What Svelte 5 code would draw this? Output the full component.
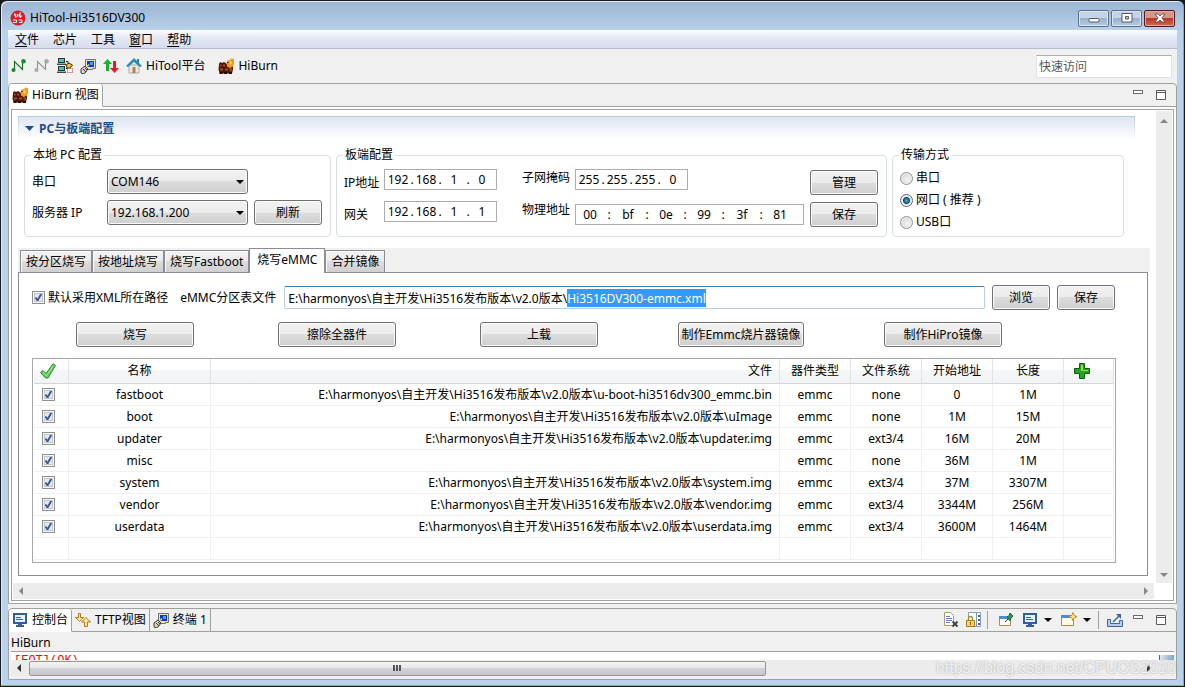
<script>
  import { onMount } from 'svelte';

  const menus = [
    ['文', '件', true],
    ['芯', '片', false],
    ['工', '具', false],
    ['窗', '口', true],
    ['帮', '助', true]
  ];
  const tabs = ['按分区烧写', '按地址烧写', '烧写Fastboot', '烧写eMMC', '合并镜像'];
  let activeTab = $state(3);
  const actions = ['烧写', '擦除全器件', '上载', '制作Emmc烧片器镜像', '制作HiPro镜像'];

  const base = 'E:\\harmonyos\\自主开发\\Hi3516发布版本\\v2.0版本\\';
  const xmlName = 'Hi3516DV300-emmc.xml';
  let path = $state(base + xmlName);

  const rows = $state([
    { on: true, name: 'fastboot', file: base + 'u-boot-hi3516dv300_emmc.bin', type: 'emmc', fs: 'none', start: '0', len: '1M' },
    { on: true, name: 'boot', file: base + 'uImage', type: 'emmc', fs: 'none', start: '1M', len: '15M' },
    { on: true, name: 'updater', file: base + 'updater.img', type: 'emmc', fs: 'ext3/4', start: '16M', len: '20M' },
    { on: true, name: 'misc', file: '', type: 'emmc', fs: 'none', start: '36M', len: '1M' },
    { on: true, name: 'system', file: base + 'system.img', type: 'emmc', fs: 'ext3/4', start: '37M', len: '3307M' },
    { on: true, name: 'vendor', file: base + 'vendor.img', type: 'emmc', fs: 'ext3/4', start: '3344M', len: '256M' },
    { on: true, name: 'userdata', file: base + 'userdata.img', type: 'emmc', fs: 'ext3/4', start: '3600M', len: '1464M' }
  ]);

  const ip = ['192', '168', '1', '0'];
  const gateway = ['192', '168', '1', '1'];
  const mask = ['255', '255', '255', '0'];
  const mac = ['00', 'bf', '0e', '99', '3f', '81'];
  let mode = $state('net');

  let pathInput;
  onMount(() => {
    pathInput.focus();
    pathInput.setSelectionRange(base.length, path.length);
  });
</script>

{#snippet beaver()}
  <svg class="ic" viewBox="0 0 16 16" aria-hidden="true">
    <path d="M1 6l1-2 2 1 2-1 3 2h6v5l-1 4.500H2L.5 12z" fill="#4a1605" />
    <path d="M2 6.500h1.500v2H2zM5 6.500h2v2H5zM2 10.500h3v2H2zM7 10.500h3v2H7z" fill="#b14c18" />
    <path d="M8.500 5.500L9.500 2.500 12 2l1.500-1.500L16 1v5l-1.500 3-3 1-2.500-1.500z" fill="#f09a20" />
    <path d="M11 3.500l2.500-.5.500 2.500-2 1.500z" fill="#ffc95a" />
    <path d="M9 4h1.500v1H9z" fill="#3b1204" />
    <path d="M11 10.500l3-1v3.500l-2 1z" fill="#9c3a10" />
    <path d="M1.500 14h3v2h-3zM6 14h3v2H6zM11 14h3v2h-3z" fill="#240a03" />
  </svg>
{/snippet}

{#snippet node(c, d)}
  <svg class="ic" viewBox="0 0 16 16" aria-hidden="true">
    <path d="M3.500 12V3.500l8 8V4" fill="none" stroke={d} stroke-width="1.100" />
    <circle cx="2.500" cy="12" r="2.100" fill={c} />
    <circle cx="12.500" cy="3.200" r="2.300" fill={c} />
  </svg>
{/snippet}

{#snippet terminal()}
  <svg class="ic" viewBox="0 0 16 16" aria-hidden="true">
    <path d="M5.500 1.500h10v9h-3v1h-5v-1h-2z" fill="#e8e4cf" stroke="#77745f" />
    <rect x="7" y="3" width="7" height="6" fill="#0a35e0" />
    <path d="M10 4h3v3h-3z" fill="#4d9df5" />
    <path d="M1 11l4-3 3 3-3 4-2 1-2-1z" fill="#d9d6bd" stroke="#3c3a2c" />
    <path d="M3 11l3 3M5 10l2 2" stroke="#3c3a2c" />
    <path d="M7 8.500l2-2" stroke="#f2e04c" stroke-width="1.500" />
  </svg>
{/snippet}

{#snippet monitor()}
  <svg class="ic" viewBox="0 0 16 16" aria-hidden="true">
    <rect x="2" y="2" width="12" height="9" fill="#eaf2fb" stroke="#2f5f9e" stroke-width="2" />
    <path d="M4 5.500h5M4 7.500h7" stroke="#3c5f91" />
    <path d="M6 12h4v1h2v2H4v-2h2z" fill="#33609c" />
  </svg>
{/snippet}

{#snippet paneButtons()}
  <span class="pane-btns">
    <button aria-label="最小化"><svg width="10" height="12" viewBox="0 0 10 12"><rect x=".5" y="1.500" width="9" height="3" fill="#fff" stroke="#6a6a6a" /></svg></button>
    <button aria-label="最大化"><svg width="10" height="12" viewBox="0 0 10 12"><path d="M.5 1.500h9v9h-9zM0 3.500h10" fill="#fff" stroke="#5a5a5a" /></svg></button>
  </span>
{/snippet}

{#snippet octets(values, label, id)}
  <div class="seg" role="group" aria-label={label}>
    {#each values as v, i}
      {#if i > 0}<span>.</span>{/if}
      <input id={i === 0 ? id : undefined} aria-label={`${label} ${i + 1}`} value={v} maxlength="3" />
    {/each}
  </div>
{/snippet}

<div class="window">
  <header class="title">
    <svg class="ic" viewBox="0 0 16 16" aria-hidden="true">
      <circle cx="8" cy="8" r="7.500" fill="#d81f26" />
      <path d="M4.500 3.500l1.500 4M10.500 2.500L9 6.500M7.500 4v2.500M11.500 5.500l-1.500 2" stroke="#fff" stroke-width="1.400" fill="none" />
      <path d="M3 10h3.500v2.500H3M8.500 10h3.500v2.500H9" stroke="#fff" fill="none" />
    </svg>
    <h1>HiTool-Hi3516DV300</h1>
    <div class="wbtns">
      <button aria-label="最小化窗口"><svg width="12" height="12" viewBox="0 0 12 12"><rect x="1" y="6.500" width="10" height="3.500" rx="1" fill="#fff" stroke="#535b6b" /></svg></button>
      <button aria-label="最大化窗口"><svg width="12" height="12" viewBox="0 0 12 12"><path fill-rule="evenodd" d="M1 1.500h10v8.500H1zM4.500 4.500v2.500h3V4.500z" fill="#fff" stroke="#535b6b" /></svg></button>
      <button class="close" aria-label="关闭窗口"><svg width="12" height="12" viewBox="0 0 12 12"><path d="M1 2h3l2 2 2-2h3L8 6l3 4H8L6 8l-2 2H1l3-4z" fill="#fff" stroke="#5c3a46" stroke-width=".8" /></svg></button>
    </div>
  </header>

  <div class="client">
    <nav class="menu">
      {#each menus as [a, b, u]}
        <button><span class:u>{a}</span>{b}</button>
      {/each}
    </nav>

    <div class="toolbar">
      <button aria-label="连接">{@render node('#1b8a2f', '#0c6b1e')}</button>
      <button aria-label="断开">{@render node('#a9a9a9', '#8f8f8f')}</button>
      <button aria-label="网络配置">
        <svg class="ic" viewBox="0 0 16 16" aria-hidden="true">
          <path d="M1 0h7v5H1zM1 8h7v5H1z" fill="#333" /><path d="M2 1h5v3H2zM2 9h5v3H2z" fill="#39c6c2" />
          <path d="M0 5h9v2H0zM0 13h9v2H0z" fill="#a5a5a5" /><path d="M0 6h9v1H0zM0 14h9v1H0z" fill="#444" />
          <path d="M9 3.500h2v3M9 10.500h2v-2" fill="none" stroke="#222" />
          <path d="M9 7l3-2 3.500 2-2.500 3H10z" fill="#e8c93a" stroke="#3b3008" />
          <path d="M10.500 10.500h5v4h-5z" fill="#fff" stroke="#d22" stroke-dasharray="1 1" />
        </svg>
      </button>
      <button aria-label="终端">{@render terminal()}</button>
      <button aria-label="传输">
        <svg class="ic" viewBox="0 0 16 16" aria-hidden="true">
          <path d="M4.500 1L9 6H6v7H3V6H0z" fill="#13b52a" />
          <path d="M11.500 15L7 10h3V3h3v7h3z" fill="#dd1c2b" />
        </svg>
      </button>
      <button class="wide">
        <svg class="ic" viewBox="0 0 16 16" aria-hidden="true">
          <path d="M3 7h10v8H3z" fill="#e9e9e6" stroke="#a8a8a4" />
          <path d="M6.500 9h3v6h-3z" fill="#b98146" />
          <path d="M11 1h2v4h-2z" fill="#2d7fa8" />
          <path d="M8 0l8 8-2 1-6-5-6 5-2-1z" fill="#2c8bb8" />
        </svg>HiTool平台</button>
      <button class="wide">{@render beaver()}HiBurn</button>
      <input class="quick" aria-label="快速访问" placeholder="快速访问" />
    </div>

    <main class="pane">
      <div class="pane-head">
        <div class="vtab on">{@render beaver()}HiBurn 视图</div>
        {@render paneButtons()}
      </div>
      <div class="viewport">
        <div class="content">
          <h2>
            <svg width="9" height="5" viewBox="0 0 9 5" aria-hidden="true"><path d="M0 0h9L4.500 5z" fill="#1f4e86" /></svg>PC与板端配置
          </h2>

          <div class="groups">
            <fieldset class="local">
              <legend>本地 PC 配置</legend>
              <div class="local-grid">
                <label for="port">串口</label>
                <div class="sel">
                  <select id="port"><option>COM146</option></select>
                  <svg width="8" height="4" viewBox="0 0 8 4" aria-hidden="true"><path d="M0 0h8L4 4z" /></svg>
                </div>
                <span></span>
                <label for="srv">服务器 IP</label>
                <div class="sel">
                  <select id="srv"><option>192.168.1.200</option></select>
                  <svg width="8" height="4" viewBox="0 0 8 4" aria-hidden="true"><path d="M0 0h8L4 4z" /></svg>
                </div>
                <button class="btn">刷新</button>
              </div>
            </fieldset>

            <fieldset class="board">
              <legend>板端配置</legend>
              <div class="board-row">
                <div class="stack labels low"><label for="ip">IP地址</label><label for="gw">网关</label></div>
                <div class="stack fields">
                  {@render octets(ip, 'IP地址', 'ip')}
                  {@render octets(gateway, '网关', 'gw')}
                </div>
                <div class="stack labels second"><label for="mask">子网掩码</label><label for="mac">物理地址</label></div>
                <div class="stack fields loose">
                  {@render octets(mask, '子网掩码', 'mask')}
                  <div class="seg mac" role="group" aria-label="物理地址">
                    {#each mac as v, i}
                      {#if i > 0}<span>:</span>{/if}
                      <input id={i === 0 ? 'mac' : undefined} aria-label={`物理地址 ${i + 1}`} value={v} maxlength="2" />
                    {/each}
                  </div>
                </div>
                <div class="stack side"><button class="btn">管理</button><button class="btn">保存</button></div>
              </div>
            </fieldset>

            <fieldset class="trans">
              <legend>传输方式</legend>
              <div class="radios">
                <label><input type="radio" value="serial" bind:group={mode} />串口</label>
                <label><input type="radio" value="net" bind:group={mode} />网口 ( 推荐 )</label>
                <label><input type="radio" value="usb" bind:group={mode} />USB口</label>
              </div>
            </fieldset>
          </div>

          <div class="tabs" role="tablist">
            {#each tabs as t, i}
              <button role="tab" aria-selected={i === activeTab} class:on={i === activeTab} onclick={() => (activeTab = i)}>{t}</button>
            {/each}
          </div>

          <section class="panel">
            <div class="path-row">
              <label class="chk"><input type="checkbox" checked />默认采用XML所在路径</label>
              <label class="plabel" for="xml">eMMC分区表文件</label>
              <input id="xml" class="path" bind:this={pathInput} bind:value={path} spellcheck="false" />
              <button class="btn small">浏览</button>
              <button class="btn small">保存</button>
            </div>

            <div class="actions">
              {#each actions as a}<button class="btn">{a}</button>{/each}
            </div>

            <div class="table-box">
              <table>
                <colgroup>
                  <col class="c-check" /><col class="c-name" /><col /><col class="c-n" /><col class="c-n" /><col class="c-n" /><col class="c-n" /><col class="c-add" />
                </colgroup>
                <thead>
                  <tr>
                    <th class="first">
                      <svg class="ic" viewBox="0 0 16 16" role="img" aria-label="全选"><path d="M.5 9.500L3 7.500l3 3L13 .8l2.500 1.700L8 15H5.500z" fill="#5fce5a" stroke="#2c8f35" /><path d="M3 9l3.500 4L13.500 2.500" stroke="#a5eb9a" fill="none" /></svg>
                    </th>
                    <th>名称</th><th class="file">文件</th><th>器件类型</th><th>文件系统</th><th>开始地址</th><th>长度</th>
                    <th class="add">
                      <svg class="ic" viewBox="0 0 16 16" role="img" aria-label="添加"><path d="M5.500.5h5v5h5v5h-5v5h-5v-5h-5v-5h5z" fill="#22a722" stroke="#0c5c0c" /><path d="M7 2h2v5h5v1H7z" fill="#8be04a" /></svg>
                    </th>
                  </tr>
                </thead>
                <tbody>
                  {#each rows as r}
                    <tr>
                      <td class="first"><input type="checkbox" aria-label={r.name} bind:checked={r.on} /></td>
                      <td>{r.name}</td><td class="file">{r.file}</td><td>{r.type}</td><td>{r.fs}</td><td>{r.start}</td><td>{r.len}</td><td></td>
                    </tr>
                  {/each}
                  <tr><td></td><td></td><td></td><td></td><td></td><td></td><td></td><td></td></tr>
                </tbody>
              </table>
            </div>
          </section>
        </div>

        <div class="vbar" aria-hidden="true">
          <svg width="8" height="4" viewBox="0 0 8 4"><path d="M0 4h8L4 0z" fill="#868686" /></svg>
          <svg width="8" height="4" viewBox="0 0 8 4"><path d="M0 0h8L4 4z" fill="#868686" /></svg>
        </div>
        <div class="hbar" aria-hidden="true">
          <svg width="4" height="8" viewBox="0 0 4 8"><path d="M4 0v8L0 4z" fill="#868686" /></svg>
          <svg width="4" height="8" viewBox="0 0 4 8"><path d="M0 0v8l4-4z" fill="#868686" /></svg>
        </div>
      </div>
    </main>

    <section class="pane console">
      <div class="pane-head">
        <button class="vtab on">{@render monitor()}控制台</button>
        <button class="vtab">
          <svg class="ic" viewBox="0 0 16 16" aria-hidden="true">
            <path d="M3.500 1.500h2v4h3l-4 4-4-4h3z" fill="#fbe3a0" stroke="#b07a1c" />
            <path d="M11 5.500l4.500 4.500h-3v4.500h-3V10h-3z" fill="#fbe3a0" stroke="#b07a1c" />
          </svg>TFTP视图</button>
        <button class="vtab">{@render terminal()}终端 1</button>
        <div class="ctools">
          <button aria-label="清除控制台">
            <svg class="ic" viewBox="0 0 16 16"><path d="M1.500.5h6l3 3v10h-9z" fill="#fff" stroke="#b49b5a" /><path d="M3 4.500h4M3 6.500h6M3 8.500h6M3 10.500h4" stroke="#5c82b8" /><path d="M9.500 9.500l5 5M14.500 9.500l-5 5" stroke="#444" stroke-width="2" /></svg>
          </button>
          <button class="lock" aria-label="滚动锁定">
            <svg class="ic" viewBox="0 0 16 16"><path d="M2.500.5h12v14h-12z" fill="#fdfdfd" stroke="#8a9cc0" /><path d="M10.500 1v13" stroke="#7d97c9" /><path d="M12 3h2v2h-2zM12 7h2v2h-2zM12 11h2v2h-2z" fill="#3f68ad" /><path d="M2.500 8V6.500a2 2 0 0 1 4 0V8" fill="none" stroke="#b08a25" stroke-width="1.400" /><path d="M.5 8.500h8v6h-8z" fill="#f7d36a" stroke="#a87a14" /><path d="M4 10h1v3H4z" fill="#8a5f08" /></svg>
          </button>
          <i></i>
          <button class="pin" aria-label="固定控制台">
            <svg class="ic" viewBox="0 0 16 16"><path d="M1.500 4.500h11v9h-11z" fill="#fff" stroke="#a3904e" /><path d="M1 4h9v3H1z" fill="#4c8dd8" /><path d="M7 10l4-4" stroke="#333" /><path d="M9 5l2-1 1-3 3 3-2 2-1 3z" fill="#2d9a45" stroke="#1a6c2b" /></svg>
          </button>
          <button aria-label="显示控制台">{@render monitor()}</button>
          <button class="dd" aria-label="选择控制台"><svg width="8" height="4" viewBox="0 0 8 4"><path d="M0 0h8L4 4z" /></svg></button>
          <button class="gap" aria-label="打开控制台">
            <svg class="ic" viewBox="0 0 16 16"><path d="M.5 3.500h12v10H.5z" fill="#fffbe8" stroke="#a3904e" /><path d="M0 3h9v3H0z" fill="#4c8dd8" /><path d="M12 .5l1.200 3 3 1.200-3 1.200-1.200 3-1.200-3-3-1.200 3-1.200z" fill="#ffe792" stroke="#b98518" stroke-width=".9" /></svg>
          </button>
          <button class="dd" aria-label="控制台类型"><svg width="8" height="4" viewBox="0 0 8 4"><path d="M0 0h8L4 4z" /></svg></button>
          <i></i>
          <button aria-label="分离"><svg class="ic" viewBox="0 0 16 16"><path d="M.5 7.500h3v4h9v-3h3v6H.5z" fill="#b9cbe8" stroke="#3e649f" /><path d="M6 10l6-6" stroke="#3e649f" stroke-width="1.500" /><path d="M9 2h5v5z" fill="#3e649f" /></svg></button>
          {@render paneButtons()}
        </div>
      </div>
      <div class="cname">HiBurn</div>
      <div class="log"><span>[EOT](OK)</span><b></b></div>
      <div class="cbar" aria-hidden="true">
        <svg width="4" height="8" viewBox="0 0 4 8"><path d="M4 0v8L0 4z" fill="#333" /></svg>
        <div class="thumb"><svg width="9" height="6" viewBox="0 0 9 6"><path d="M1 0v6M4 0v6M7 0v6" stroke="#555" stroke-width="2" /></svg></div>
        <svg class="r" width="4" height="8" viewBox="0 0 4 8"><path d="M0 0v8l4-4z" fill="#333" /></svg>
      </div>
    </section>
  </div>
  <div class="mark">https://blog.csdn.net/CPUOS2010</div>
</div>

<style>
  :global(body) { background: #1a1a1e; }
  .window, .window :global(*) { box-sizing: border-box; }
  .window {
    position: relative;
    display: flex;
    flex-direction: column;
    min-height: 100vh;
    padding: 0 7px 6px;
    border: 1px solid #16181c;
    border-radius: 7px 7px 0 0;
    background: linear-gradient(#9ab4d2, #b9d1ea 30px, #b9d1ea);
    box-shadow: inset -1px -1px 0 #35c8ea, inset 1px 1px 0 #e4eef8;
    font: 12px/18px "Noto Sans", "Noto Sans CJK SC", sans-serif;
    color: #000;
  }
  button, input, select { font: inherit; color: inherit; margin: 0; }
  button { padding: 0; border: 0; background: none; white-space: nowrap; }
  .ic { width: 16px; height: 16px; flex: none; display: block; }

  .title { display: flex; align-items: center; height: 29px; padding: 5px 1px 0 2px; gap: 4px; }
  h1 { margin: 0; font: inherit; line-height: 20px; flex: 1; }
  .wbtns { display: flex; gap: 2px; padding-right: 1px; }
  .wbtns button {
    display: flex; align-items: center; justify-content: center;
    width: 31px; height: 17px;
    border: 1px solid #5d6f88; border-radius: 2px;
    box-shadow: inset 0 0 0 1px #d9e6f4;
    background: linear-gradient(#c3d4e7 50%, #99b1cd 50%, #b6cce4);
  }
  .wbtns .close { border-color: #4d1a22; box-shadow: inset 0 0 0 1px #e3a59d; background: linear-gradient(#dc9488 50%, #b8382a 50%, #cf6a4e); }

  .client { flex: 1; display: flex; flex-direction: column; background: #f0f0f0; min-width: 0; }
  .menu { display: flex; height: 19px; border-bottom: 1px solid #b5bcd2; background: linear-gradient(#fbfcfe, #e6eaf5 40%, #d6dcee); }
  .menu button { padding: 0 7px; line-height: 20px; }
  .u { text-decoration: underline; text-underline-offset: 2px; }
  .toolbar { display: flex; align-items: center; height: 34px; padding: 0 5px 0 3px; gap: 7px; }
  .wide { display: flex; align-items: center; gap: 4px; line-height: 20px; }
  .wide + .wide { margin-left: 6px; }
  .quick { margin-left: auto; width: 136px; height: 23px; padding: 0 2px; border: 1px solid #e2e3ea; border-top-color: #abadb3; background: #fff; }
  .quick::placeholder { color: #555; opacity: 1; }

  .pane { display: flex; flex-direction: column; border: 1px solid #a0a0a0; border-radius: 4px 4px 0 0; min-width: 0; }
  main.pane { flex: 1; padding-bottom: 2px; }
  .pane-head { display: flex; align-items: stretch; height: 23px; border-bottom: 1px solid #a0a0a0; }
  .vtab { display: flex; align-items: center; gap: 4px; padding: 0 3px; border-right: 1px solid #a0a0a0; margin-bottom: -1px; border-bottom: 1px solid #a0a0a0; white-space: nowrap; }
  .vtab.on { background: #fff; border-bottom-color: #fff; border-radius: 4px 3px 0 0; }
  .pane-btns { margin-left: auto; display: flex; align-items: center; gap: 13px; padding: 0 10px 0 8px; }
  .pane-btns svg { display: block; }

  .viewport { flex: 1; display: grid; grid-template: 1fr 16px / 1fr 16px; gap: 0 2px; margin: 2px 2px 0; padding: 1px; border: 1px solid #a0a0a0; background: #fff; box-shadow: 0 0 0 2px #fff; }
  .content { padding: 5px 5px 7px; min-width: 0; }
  .vbar, .hbar { background: #ececec; display: flex; justify-content: space-between; align-items: center; }
  .vbar { flex-direction: column; padding: 8px 0 6px; }
  .hbar { padding: 0 6px; }

  h2 {
    display: flex; align-items: center; gap: 5px;
    height: 24px; margin: 0 14px 0 0; padding: 0 6px;
    border: 1px solid #b8cae0; border-bottom: 0;
    border-image: linear-gradient(#b8cae0, #fff) 1;
    background: linear-gradient(#dfe6f2, #fff);
    font-size: 12px; color: #1f4e86;
  }
  .groups { display: grid; grid-template-columns: 307fr 551fr 232fr; gap: 5px; margin: 6px 25px 11px 6px; }
  fieldset { margin: 0; padding: 0 7px; height: 91px; border: 1px solid #d5dfe5; border-radius: 4px; min-width: 0; }
  legend { margin-left: -1px; padding: 0 2px; }
  .local-grid { display: grid; grid-template-columns: 69px 1fr 68px; gap: 6px; align-items: center; padding: 5px 1px 0 0; }
  .local-grid label { white-space: nowrap; }
  .sel { display: grid; align-items: center; }
  .sel > * { grid-area: 1 / 1; }
  .sel svg { justify-self: end; margin-right: 4px; pointer-events: none; }
  select, .btn {
    height: 25px;
    border: 1px solid #707070; border-radius: 3px;
    box-shadow: inset 0 0 0 1px #fafafa;
    background: linear-gradient(#f2f2f2, #ebebeb 50%, #dddddd 50%, #cfcfcf);
  }
  select { appearance: none; width: 100%; padding: 0 3px; }
  .board-row { display: flex; padding: 5px 1px 0 0; }
  .stack { display: flex; flex-direction: column; }
  .labels { gap: 14px; width: 40px; white-space: nowrap; }
  .low { padding-top: 5px; }
  .second { width: 53px; margin-left: 25px; }
  .fields { gap: 11px; }
  .loose { gap: 14px; }
  .side { gap: 7px; margin-left: auto; padding-top: 1px; }
  .side .btn { width: 68px; }
  .seg { display: flex; align-items: center; align-self: flex-start; width: 113px; height: 21px; padding: 0 1px; border: 1px solid #abadb3; background: #fff; }
  .seg input { width: 24px; padding: 0; border: 0; outline: 0; text-align: center; background: none; }
  .seg span { width: 4px; text-align: center; }
  .mac input { width: 26px; }
  .mac span { width: 12px; }
  .mac { width: 229px; }
  .radios { display: flex; flex-direction: column; gap: 4px; padding-top: 5px; }
  .radios label, .chk { display: flex; align-items: center; gap: 3px; white-space: nowrap; }
  input[type='radio'] { appearance: none; width: 13px; height: 13px; border: 1px solid #8e8f8f; border-radius: 50%; box-shadow: inset 0 0 0 1px #f4f4f4; background: radial-gradient(circle at 60% 60%, #f6f6f6, #c4c8cc); }
  input[type='radio']:checked { background: radial-gradient(circle, #4fb4e6 0, #17496e 3px, #dde3e8 4px); border-color: #5a6a78; }
  input[type='checkbox'] {
    appearance: none; display: block; width: 13px; height: 13px; border: 1px solid #8e8f8f;
    background: #e4e7ec; box-shadow: inset 0 0 0 1px #f4f4f4, inset 0 0 0 2px #c3c8d0;
  }
  input[type='checkbox']:checked { background: url("data:image/svg+xml,%3Csvg xmlns='http://www.w3.org/2000/svg' viewBox='0 0 11 11'%3E%3Cpath d='M2.500 5.500l2 3L8.500 1.500' fill='none' stroke='%233f5596' stroke-width='1.900'/%3E%3C/svg%3E") #e4e7ec; }

  .tabs { display: flex; align-items: flex-end; height: 24px; padding-left: 2px; margin-right: -1px; background: #f0f0f0; }
  .tabs button { height: 22px; padding: 0 5px; border: 1px solid #8b8c95; border-bottom: 0; background: linear-gradient(#f2f2f2, #ebebeb 50%, #dddddd 50%, #d0d0d0); box-shadow: inset 1px 1px 0 #fafafa; }
  .tabs button.on { position: relative; height: 25px; padding: 0 7px 3px; margin-bottom: -1px; background: #fff; }
  .panel { margin-right: 1px; padding: 12px 31px 12px 13px; border: 1px solid #8b8c95; }
  .path-row { display: flex; align-items: center; padding-right: 1px; }
  .plabel { margin: 0 8px 0 12px; white-space: nowrap; }
  .path { flex: 1; min-width: 0; height: 23px; padding: 0 3px; border: 1px solid #b5cfe7; border-top-color: #3d7bad; border-radius: 2px; outline: 0; background: #fff; }
  .path::selection { background: #3399ff; color: #fff; }
  .small { width: 58px; margin-left: 7px; }
  .actions { display: grid; grid-template-columns: repeat(5, 1fr); justify-items: center; margin: 12px 72px 11px 2px; }
  .actions .btn { min-width: 118px; padding: 0 3px; }
  .table-box { border: 1px solid #a5a8ae; padding: 0 1px 2px; }
  table { width: 100%; table-layout: fixed; border-collapse: separate; border-spacing: 0; }
  .c-check { width: 35px; }
  .c-name { width: 142px; }
  .c-n { width: 71px; }
  .c-add { width: 50px; }
  th { height: 25px; padding: 0; font-weight: 400; border-right: 1px solid #e0e2e5; border-bottom: 1px solid #d5d5d5; background: linear-gradient(#fff 45%, #f5f6f8 45%, #f2f3f5); }
  td { height: 22px; padding: 0; text-align: center; border-right: 1px solid #f0f0f0; border-bottom: 1px solid #f0f0f0; white-space: nowrap; overflow: hidden; }
  .file { text-align: right; padding-right: 7px; }
  td.first { padding-left: 8px; }
  th.first { padding-left: 6px; }
  th.add { padding-left: 10px; }

  .console { margin-top: 4px; padding-bottom: 3px; }
  .ctools { display: flex; align-items: center; margin-left: auto; }
  .ctools i { width: 1px; height: 18px; margin: 0 6px; background: #a0a0a0; }
  .ctools button { margin: 0 2px; }
  .ctools .lock { margin-left: 5px; }
  .ctools .pin { margin: 0 6px 0 4px; }
  .ctools .dd { margin: 0 5px 0 4px; height: 16px; display: flex; align-items: center; }
  .ctools .dd + i { margin-left: 2px; }
  .ctools .gap { margin-left: 4px; }
  .ctools .pane-btns button { margin: 0; }
  .ctools .lock + i { margin-left: 3px; }
  .cname { margin: 2px 2px 0; height: 18px; border-bottom: 1px solid #a0a0a0; }
  .log { display: flex; justify-content: space-between; margin: 0 2px; height: 8px; overflow: hidden; background: #fff; color: #f00; font: 12px/16px "Liberation Mono", monospace; }
  .log span { padding: 1px 0 0 3px; }
  .log b { width: 15px; height: 5px; margin-top: 3px; border-left: 1px solid #3c6f95; background: linear-gradient(90deg, #dfe9f0, #9fb6c6 70%, #5bb4dc); }
  .cbar { display: flex; align-items: center; margin: 0 2px; height: 16px; padding: 0 23px 0 6px; background: #ececec; }
  .thumb { width: 65%; height: 15px; margin-left: 8px; display: flex; align-items: center; justify-content: center; border: 1px solid #979797; border-radius: 2px; background: linear-gradient(#f4f4f4, #e6e6e8 50%, #d2d3d6 50%, #c6c7ca); }
  .r { margin-left: auto; }
  .mark { position: absolute; right: 8px; bottom: 8px; font: 16px/20px "Liberation Sans", sans-serif; color: rgba(255, 255, 255, 0.75); text-shadow: 0 0 2px rgba(120, 120, 120, 0.6); pointer-events: none; }
</style>
